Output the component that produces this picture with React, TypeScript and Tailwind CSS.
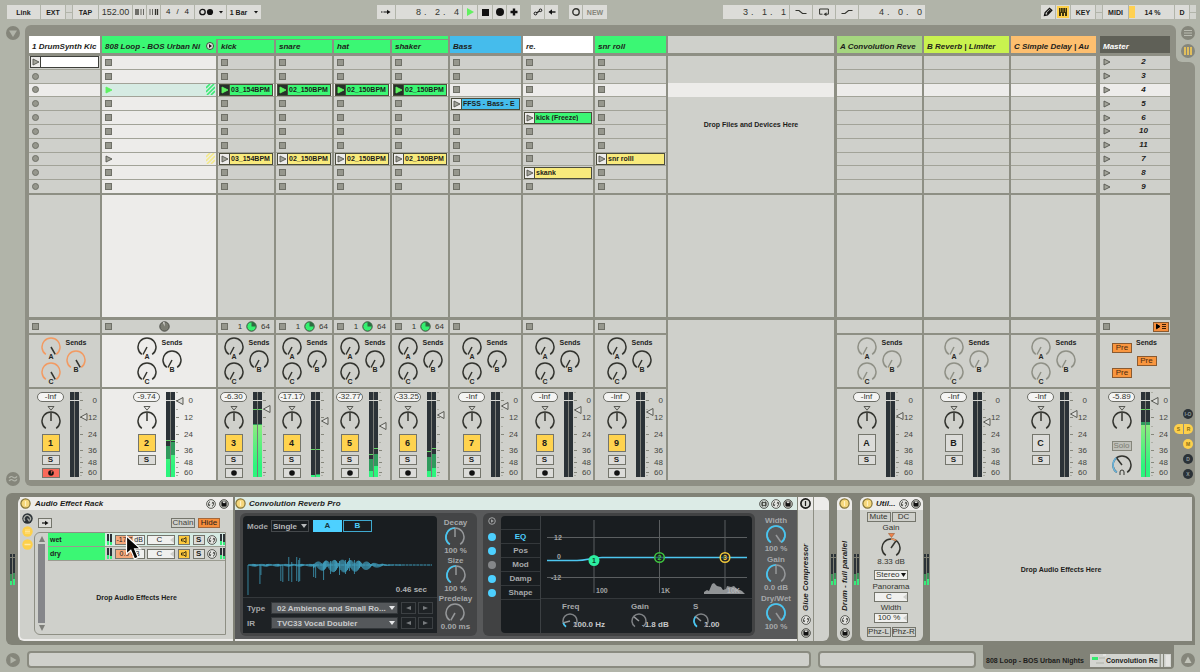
import type { ReactNode } from "react";

type Level = { peak: number; dim: number; bright: number };

interface IClip {
  row: number;
  name: string;
  color: string;
  playing?: boolean;
}

interface ITrack {
  id: string;
  name: string;
  header: string;
  width: string;
  pad: string;
  kind: "first" | "group" | "child" | "wide" | "return" | "master";
  volume: string;
  fader: number;
  levels?: [Level, Level];
  clips?: IClip[];
}

const GREEN = "bg-[#3bf774]";
const YELLOW = "bg-[#f8ea7c]";
const BLUE = "bg-[#45bcec]";
const ROWS = [0, 1, 2, 3, 4, 5, 6, 7, 8, 9];
const SCENES = ["2", "3", "4", "5", "6", "10", "11", "7", "8", "9"];

const firstTracks: ITrack[] = [
  { id: "1", name: "1 DrumSynth Kic", header: "bg-white", width: "w-[71px]", pad: "pl-2", kind: "first", volume: "-Inf", fader: 25 },
  {
    id: "2", name: "808 Loop - BOS Urban Ni", header: GREEN, width: "w-[114px]", pad: "pl-[31px]", kind: "group", volume: "-9.74", fader: 9,
    levels: [{ peak: 48, dim: 54, bright: 67 }, { peak: 48, dim: 50, bright: 63 }],
  },
];

const childTracks: ITrack[] = [
  {
    id: "3", name: "kick", header: GREEN, width: "w-14", pad: "pl-0.5", kind: "child", volume: "-6.30", fader: 17,
    levels: [{ peak: 17, dim: 32, bright: 33 }, { peak: 17, dim: 32, bright: 33 }],
    clips: [{ row: 2, name: "03_154BPM", color: GREEN, playing: true }, { row: 7, name: "03_154BPM", color: YELLOW }],
  },
  {
    id: "4", name: "snare", header: GREEN, width: "w-14", pad: "pl-0.5", kind: "child", volume: "-17.17", fader: 29,
    levels: [{ peak: 57, dim: 83, bright: 83 }, { peak: 57, dim: 82, bright: 83 }],
    clips: [{ row: 2, name: "02_150BPM", color: GREEN, playing: true }, { row: 7, name: "02_150BPM", color: YELLOW }],
  },
  {
    id: "5", name: "hat", header: GREEN, width: "w-14", pad: "pl-0.5", kind: "child", volume: "-32.77", fader: 34,
    levels: [{ peak: 62, dim: 67, bright: 79 }, { peak: 56, dim: 62, bright: 74 }],
    clips: [{ row: 2, name: "02_150BPM", color: GREEN, playing: true }, { row: 7, name: "02_150BPM", color: YELLOW }],
  },
  {
    id: "6", name: "shaker", header: GREEN, width: "w-14", pad: "pl-0.5", kind: "child", volume: "-33.25", fader: 23,
    levels: [{ peak: 59, dim: 65, bright: 79 }, { peak: 56, dim: 62, bright: 76 }],
    clips: [{ row: 2, name: "02_150BPM", color: GREEN, playing: true }, { row: 7, name: "02_150BPM", color: YELLOW }],
  },
];

const wideTracks: ITrack[] = [
  { id: "7", name: "Bass", header: BLUE, width: "w-[71px]", pad: "pl-2", kind: "wide", volume: "-Inf", fader: 14, clips: [{ row: 3, name: "FFSS - Bass - E", color: BLUE }] },
  { id: "8", name: "re.", header: "bg-white", width: "w-[70px]", pad: "pl-2", kind: "wide", volume: "-Inf", fader: 18, clips: [{ row: 4, name: "kick (Freeze)", color: GREEN }, { row: 8, name: "skank", color: YELLOW }] },
  { id: "9", name: "snr roll", header: GREEN, width: "w-[71px]", pad: "pl-2", kind: "wide", volume: "-Inf", fader: 20, clips: [{ row: 7, name: "snr rolll", color: YELLOW }] },
];

const returnTracks: ITrack[] = [
  { id: "A", name: "A Convolution Reve", header: "bg-[#a5d67f]", width: "w-[85px]", pad: "pl-4", kind: "return", volume: "-Inf", fader: 24 },
  { id: "B", name: "B Reverb | Limiter", header: "bg-[#c9f24f]", width: "w-[85px]", pad: "pl-4", kind: "return", volume: "-Inf", fader: 30 },
  { id: "C", name: "C Simple Delay | Au", header: "bg-[#fdbf6f]", width: "w-[85px]", pad: "pl-4", kind: "return", volume: "-Inf", fader: 22 },
];

const master: ITrack = {
  id: "M", name: "Master", header: "bg-[#5f6057] text-white", width: "w-[70px]", pad: "pl-2", kind: "master", volume: "-5.89", fader: 9,
  levels: [{ peak: 17, dim: 30, bright: 33 }, { peak: 17, dim: 30, bright: 33 }],
};

const point = (c: number, r: number, deg: number) => {
  const a = ((deg - 90) * Math.PI) / 180;
  return `${(c + r * Math.cos(a)).toFixed(2)} ${(c + r * Math.sin(a)).toFixed(2)}`;
};

const arc = (c: number, r: number, from: number, to: number) =>
  `M${point(c, r, from)} A${r} ${r} 0 ${to - from > 180 ? 1 : 0} 1 ${point(c, r, to)}`;

interface IKnob {
  label: string;
  angle: number;
  letter?: string;
  color?: string;
  pointer?: string;
  fill?: string;
  fillFrom?: number;
  small?: boolean;
}

const Knob = ({ label, angle, letter, color = "#33342f", pointer = "#33342f", fill, fillFrom = -145, small }: IKnob) => {
  const c = small ? 8 : 10;
  const r = small ? 7 : 9;
  return (
    <span className={`relative block shrink-0 ${small ? "h-4 w-4" : letter ? "h-[25px] w-5" : "h-5 w-5"}`}>
      <svg className="block h-full w-full" viewBox={`0 0 ${c * 2} ${letter ? 25 : c * 2}`} fill="none" strokeWidth="1.5">
        <path d={arc(c, r, -145, 145)} stroke={color} />
        {fill && <path d={arc(c, r, Math.min(fillFrom, angle), Math.max(fillFrom, angle))} stroke={fill} strokeWidth="1.7" />}
        <path d={`M${c} ${c} L${point(c, r - 0.5, angle)}`} stroke={pointer} />
        {letter && (
          <text x="10" y="21.5" textAnchor="middle" fontSize="7" fontWeight="700" fill="#262722">
            {letter}
          </text>
        )}
      </svg>
      <input type="range" aria-label={label} className="absolute inset-0 m-0 h-full w-full opacity-0" />
    </span>
  );
};

const Meter = ({ levels }: { levels?: [Level, Level] }) => (
  <svg className="h-[85px] w-[9px] shrink-0" viewBox="0 0 9 85">
    <defs>
      <linearGradient id="lvl" x1="0" y1="30" x2="0" y2="85" gradientUnits="userSpaceOnUse">
        <stop offset="0" stopColor="#93ea80" />
        <stop offset="0.8" stopColor="#2cf57d" />
      </linearGradient>
    </defs>
    <rect width="9" height="85" fill="#7b7d78" />
    {[0, 5].map((x, i) => {
      const l = levels?.[i];
      return (
        <g key={x}>
          <rect x={x} width="4" height="85" fill="#2b3237" />
          {l && <rect x={x} y={l.dim} width="4" height={85 - l.dim} fill="#2f9a5c" />}
          {l && <rect x={x} y={l.bright} width="4" height={85 - l.bright} fill="url(#lvl)" />}
          {l && <rect x={x} y={l.peak} width="4" height="1" fill="#62d564" />}
        </g>
      );
    })}
    <rect y="8" width="9" height="1" fill="#d9dad6" />
  </svg>
);

const Fader = ({ name, at }: { name: string; at: number }) => (
  <span className="relative block h-[85px] w-2.5 shrink-0">
    <svg className="block h-full w-full" viewBox="0 0 10 85" stroke="#85867b">
      {[8.5, 25.5, 42.5, 58.5, 70.5, 80.5].map((y) => (
        <path key={y} d={`M1 ${y}h3`} />
      ))}
      {[0.5, 17.5, 34.5, 50.5, 65.5, 75.5, 83.5].map((y) => (
        <path key={y} d={`M1 ${y}h2`} stroke="#acada4" />
      ))}
      <path d={`M1.5 ${at} L8 ${at - 3.5} V${at + 3.5} Z`} fill="#dededb" stroke="#4b4c46" strokeWidth="0.9" />
    </svg>
    <input type="range" aria-label={`${name} volume`} className="absolute inset-0 m-0 h-full w-full opacity-0" />
  </span>
);

const Stop = () => <span className="block h-[7px] w-[7px] border border-[#6f7067] bg-[#96978d]" />;

const Play = ({ fill = "#a3a49a", stroke = "#55564f" }) => (
  <svg className="h-2 w-2" viewBox="0 0 8 8">
    <path d="M1 1 L7 4 L1 7 Z" fill={fill} stroke={stroke} strokeWidth="0.9" />
  </svg>
);

const Clip = ({ clip }: { clip: IClip }) => (
  <button className={`mx-px flex h-3 min-w-0 flex-1 items-center overflow-hidden border border-[#4b4c3c] ${clip.color}`}>
    <span className={`flex h-full w-2.5 shrink-0 items-center justify-center border-r border-[#4b4c3c] ${clip.playing ? "bg-[#263029]" : "bg-[#edecea]"}`}>
      {clip.playing ? <Play fill="#5df261" stroke="#5df261" /> : <Play />}
    </span>
    <span className="overflow-hidden pl-px text-[7px] font-bold whitespace-nowrap">{clip.name}</span>
  </button>
);

const Stripes = ({ color }: { color: string }) => (
  <svg className="h-[11px] w-[9px]" viewBox="0 0 9 11" stroke={color} strokeWidth="1.6">
    <path d="M0 4 L4 0 M0 8 L8 0 M1 11 L9 3 M5 11 L9 7" />
  </svg>
);

const ClipCell = ({ track, row }: { track: ITrack; row: number }) => {
  const clip = track.clips?.find((c) => c.row === row);
  const lit = row === 2 || track.kind === "group";
  const tinted = track.kind === "group" && row === 2;
  const bg = tinted ? "bg-[#d6ebe3]" : lit ? "bg-[#edecea]" : "bg-[#cfd0cb]";
  if (clip) {
    return (
      <div className={`flex min-w-0 items-center ${bg}`}>
        <Clip clip={clip} />
      </div>
    );
  }
  return (
    <div className={`flex min-h-0 min-w-0 items-center pl-[3px] ${bg}`}>
      {track.kind === "first" && row > 0 && <span className="block h-[7px] w-[7px] rounded-full border border-[#6f7067] bg-[#96978d]" />}
      {track.kind === "first" && row === 0 && (
        <button aria-label="Launch clip" className="-ml-0.5 mr-px flex h-3 flex-1 border border-[#3f403b] bg-white">
          <span className="flex h-full w-2.5 items-center justify-center border-r border-[#3f403b] bg-[#edecea]">
            <Play />
          </span>
        </button>
      )}
      {track.kind === "group" && (row === 2 || row === 7) && (
        <>
          {tinted ? <Play fill="#5df261" stroke="#5df261" /> : <Play />}
          <span className="mr-px ml-auto">
            <Stripes color={tinted ? "#3bea74" : "#f4ea8a"} />
          </span>
        </>
      )}
      {((track.kind === "group" && row !== 2 && row !== 7) || track.kind === "child" || track.kind === "wide") && <Stop />}
      {track.kind === "master" && (
        <>
          <Play />
          <span className="flex-1 pl-1.5 text-center text-[8px] font-bold italic">{SCENES[row]}</span>
        </>
      )}
    </div>
  );
};

const Status = ({ track }: { track: ITrack }) => (
  <>
    {track.kind !== "return" && <Stop />}
    {track.kind === "group" && (
      <svg className="ml-[47px] h-[11px] w-[11px]" viewBox="0 0 11 11">
        <circle cx="5.5" cy="5.5" r="4.7" fill="#7b7c72" stroke="#4b4c46" />
        <path d="M5.5 5.5 V1 A4.5 4.5 0 0 0 4 1.3 Z" fill="#edecea" />
      </svg>
    )}
    {track.kind === "child" && (
      <span className="ml-auto flex items-center gap-1 pr-1 text-[8px] text-[#33342f]">
        1
        <svg className="h-[11px] w-[11px]" viewBox="0 0 11 11">
          <circle cx="5.5" cy="5.5" r="4.7" fill="#35f06f" stroke="#3d4a3a" />
          <path d="M5.5 5.5 V1 A4.5 4.5 0 0 1 10 5.5 Z" fill="#2e6b42" />
        </svg>
        64
      </span>
    )}
    {track.kind === "master" && (
      <button aria-label="Back to arrangement" className="mr-px ml-auto flex h-2.5 w-4 items-center justify-center border border-[#8a5a30] bg-[#f68e3c]">
        <svg className="h-[7px] w-3" viewBox="0 0 12 7" stroke="#3a1d06">
          <path d="M1.5 1.2 L5 3.5 L1.5 5.8 Z" fill="#000" stroke="#000" />
          <path d="M7 1.5h4 M7 3.5h4 M7 5.5h4" />
        </svg>
      </button>
    )}
  </>
);

const PreButton = () => <button className="h-2.5 w-5 border border-[#8a5a30] bg-[#f9963f] text-[8px] leading-[8px] font-normal text-[#4c2a0e]">Pre</button>;

const Sends = ({ track }: { track: ITrack }) => {
  if (track.kind === "master") {
    return (
      <div className="flex gap-1 pl-1">
        <div className="flex w-5 flex-col gap-[15px] pt-2">
          <PreButton />
          <PreButton />
        </div>
        <div className="flex flex-col items-center gap-2.5 pt-1">
          <span className="text-[7px] leading-[7px] font-bold">Sends</span>
          <PreButton />
        </div>
      </div>
    );
  }
  const first = track.kind === "first";
  const props = {
    angle: first ? 150 : -152,
    color: first ? "#f29a62" : track.kind === "return" ? "#8f9086" : "#33342f",
    pointer: track.kind === "return" ? "#8f9086" : "#33342f",
  };
  return (
    <div className="flex">
      <div className="flex w-[27px] flex-col items-center pt-0.5">
        <Knob label={`${track.name} send A`} letter="A" {...props} />
        <Knob label={`${track.name} send C`} letter="C" {...props} />
      </div>
      <div className="flex w-6 flex-col items-center gap-1 pt-1">
        <span className="text-[7px] leading-[7px] font-bold">Sends</span>
        <Knob label={`${track.name} send B`} letter="B" {...props} />
      </div>
    </div>
  );
};

const SCALE = [
  { value: "0", height: "h-[17px]" },
  { value: "12", height: "h-[17px]" },
  { value: "24", height: "h-[17px]" },
  { value: "36", height: "h-[15px]" },
  { value: "48", height: "h-[9px]" },
  { value: "60", height: "h-[11px]" },
];

const Mixer = ({ track }: { track: ITrack }) => {
  const isReturn = track.kind === "return";
  const number = isReturn ? "bg-[#dcdcd9]" : "bg-[#ffd34f]";
  const armed = track.kind === "first";
  return (
    <div className="flex gap-1.5 pt-[3px]">
      <div className="flex w-[27px] flex-col items-center">
        <span className="flex h-2.5 w-full items-center justify-center rounded-full border border-[#6c6d66] bg-[#f4f4f3] text-[8px] text-[#33342f]">{track.volume}</span>
        <svg className="mt-1 h-[5px] w-2" viewBox="0 0 8 5" fill="none" stroke="#4b4c46" strokeWidth="0.9">
          <path d="M1 0.5 H7 L4 4.2 Z" />
        </svg>
        <Knob label={`${track.name} pan`} angle={0} />
        {track.kind === "master" ? (
          <>
            <button className="mt-2.5 mb-1 h-2.5 w-5 border border-[#85867b] bg-[#bfc0b9] text-[8px] leading-[8px] text-[#7b7c72]">Solo</button>
            <span className="relative">
              <Knob label="Cue volume" angle={-38} fill="#69b4dc" />
              <svg className="absolute bottom-0 left-[7px] h-1.5 w-1.5" viewBox="0 0 6 6" fill="none" stroke="#33342f">
                <path d="M1 6 V3 A2 2 0 0 1 5 3 V6" />
              </svg>
            </span>
          </>
        ) : (
          <>
            <button className={`mt-[3px] flex h-[18px] w-[18px] shrink-0 items-center justify-center border border-[#74756c] text-[9px] font-bold ${number}`}>{track.id}</button>
            <button aria-label="Solo" className="mt-[3px] flex h-2.5 w-[18px] shrink-0 items-center justify-center border border-[#74756c] bg-[#dcdcd9] text-[8px] font-bold">
              S
            </button>
            {!isReturn && track.kind !== "group" && (
              <button aria-label="Arm" className={`mt-[3px] flex h-2.5 w-[18px] shrink-0 items-center justify-center border border-[#74756c] ${armed ? "bg-[#f9695a]" : "bg-[#dcdcd9]"}`}>
                <svg className="h-1.5 w-1.5" viewBox="0 0 6 6">
                  <circle cx="3" cy="3" r="2.8" fill="#111" />
                  {armed && <path d="M3.4 3.6 V1 L4.6 1.6" stroke="#f9695a" strokeWidth="0.8" fill="none" />}
                </svg>
              </button>
            )}
          </>
        )}
      </div>
      <div className="flex">
        <Meter levels={track.levels} />
        <Fader name={track.name} at={track.fader} />
        {track.kind !== "child" && (
          <div className="flex w-2 flex-col items-end text-[8px] text-[#45463f]">
            {SCALE.map((s) => (
              <span key={s.value} className={`flex items-center ${s.height}`}>
                {s.value}
              </span>
            ))}
          </div>
        )}
      </div>
    </div>
  );
};

const Track = ({ track }: { track: ITrack }) => {
  const bg = track.kind === "group" ? "bg-[#edecea]" : "bg-[#cfd0cb]";
  const child = track.kind === "child";
  return (
    <section className={`flex shrink-0 flex-col ${track.width}`}>
      <h2 className={`flex shrink-0 items-end justify-between overflow-hidden pb-0.5 pl-[3px] text-[8px] leading-[9px] font-bold whitespace-nowrap italic ${child ? "h-[13px]" : "h-[17px]"} ${track.header}`}>
        {track.name}
        {track.kind === "group" && (
          <svg className="mr-0.5 h-2.5 w-2" viewBox="0 0 8 10">
            <circle cx="4" cy="5" r="3.5" fill="#dfe6dc" stroke="#33342f" strokeWidth="0.9" />
            <path d="M3 3 L6 5 L3 7 Z" fill="#111" />
          </svg>
        )}
      </h2>
      <div className="mt-[3px] grid h-[137px] grid-cols-1 grid-rows-10 gap-px bg-[#a2a398]">
        {ROWS.map((row) => (
          <ClipCell key={row} track={track} row={row} />
        ))}
      </div>
      <div className={`mt-0.5 flex-1 ${bg}`} />
      <div className="mt-[3px] flex h-[13px] items-center bg-[#cfd0cb] pl-[3px]">
        <Status track={track} />
      </div>
      <div className={`mt-0.5 h-[52px] ${bg} ${track.pad}`}>
        <Sends track={track} />
      </div>
      <div className={`mt-0.5 h-[91px] ${bg} ${track.pad}`}>
        <Mixer track={track} />
      </div>
    </section>
  );
};

const DropArea = () => (
  <section className="flex min-w-0 flex-1 flex-col">
    <div className="h-[17px] bg-[#cfd0cb]" />
    <div className="mt-[3px] grid h-[137px] grid-cols-1 grid-rows-10 bg-[#cfd0cb]">
      <div className="col-start-1 row-start-3 bg-[#edecea]" />
      <p className="col-start-1 row-span-full self-center text-center text-[7px] font-bold">Drop Files and Devices Here</p>
    </div>
    <div className="mt-0.5 flex-1 bg-[#cfd0cb]" />
    <div className="mt-[3px] h-[160px] bg-[#cfd0cb]" />
  </section>
);

const Cell = ({ className, children, label }: { className: string; children?: ReactNode; label?: string }) => (
  <button aria-label={label} className={`flex h-3.5 shrink-0 items-center justify-center bg-[#dcdcd8] text-[7px] font-bold ${className}`}>
    {children}
  </button>
);

const Split = () => (
  <span className="flex w-1.5 flex-col gap-px">
    <span className="h-[7px] bg-[#d3d4cf]" />
    <span className="h-1.5 bg-[#d3d4cf]" />
  </span>
);

const Position = ({ parts }: { parts: string[] }) => (
  <span className="flex h-3.5 w-[66px] items-center justify-end bg-[#dcdcd8] pr-[3px] text-[9px] text-[#33342f]">
    {parts.map((p, i) => (
      <span key={i} className={`flex gap-[3px] ${i < 2 ? "w-[19px]" : ""}`}>
        <span>{p}</span>
        {i < 2 && <span>.</span>}
      </span>
    ))}
  </span>
);

const Toolbar = () => (
  <header className="flex h-[25px] shrink-0 items-start justify-between pt-[5px] pr-1 pl-[7px]">
    <div className="flex gap-px">
      <Cell className="w-[33px]">Link</Cell>
      <Cell className="w-6">EXT</Cell>
      <Split />
      <Cell className="w-[25px]">TAP</Cell>
      <span className="flex h-3.5 w-[33px] items-center justify-center bg-[#dcdcd8] text-[9px] text-[#33342f]">152.00</span>
      <Cell className="w-[13px]" label="Nudge down">
        <svg className="h-1.5 w-2.5" viewBox="0 0 10 6" stroke="#33342f">
          <path d="M1 0v6M3 0v6" strokeWidth="1.3" />
          <path d="M6 0v6M8.5 0v6" strokeWidth="0.7" />
        </svg>
      </Cell>
      <Cell className="w-[13px]" label="Nudge up">
        <svg className="h-1.5 w-2.5" viewBox="0 0 10 6" stroke="#33342f">
          <path d="M1 0v6M3.5 0v6" strokeWidth="0.7" />
          <path d="M6.5 0v6M8.5 0v6" strokeWidth="1.3" />
        </svg>
      </Cell>
      <span className="flex h-3.5 w-[33px] items-center justify-center gap-1.5 bg-[#dcdcd8] text-[8px]">
        <span>4</span>
        <span>/</span>
        <span>4</span>
      </span>
      <Cell className="w-[31px]" label="Metronome">
        <svg className="h-2 w-7" viewBox="0 0 28 8">
          <circle cx="5.5" cy="4" r="2.7" fill="none" stroke="#111" strokeWidth="1.3" />
          <circle cx="13" cy="4" r="3.1" fill="#111" />
          <path d="M22 3h4l-2 2.5z" fill="#111" />
        </svg>
      </Cell>
      <Cell className="w-[34px] gap-[7px]">
        1 Bar
        <svg className="h-1 w-1" viewBox="0 0 4 4">
          <path d="M0 1h4l-2 2.5z" fill="#111" />
        </svg>
      </Cell>
    </div>
    <div className="flex gap-[11px]">
      <div className="flex gap-px">
        <Cell className="w-[18px]" label="Follow">
          <svg className="h-1.5 w-2.5" viewBox="0 0 10 6" stroke="#111" strokeWidth="1.2">
            <path d="M0 3h1.5M2.5 3h4" />
            <path d="M6 0.8 L9.5 3 L6 5.2Z" fill="#111" stroke="none" />
          </svg>
        </Cell>
        <Position parts={["8", "2", "4"]} />
        <Cell className="w-3.5" label="Play">
          <svg className="h-2 w-2" viewBox="0 0 8 8">
            <path d="M1 0 L8 4 L1 8Z" fill="#62f060" />
          </svg>
        </Cell>
        <Cell className="w-3.5" label="Stop">
          <span className="block h-[7px] w-[7px] bg-[#111]" />
        </Cell>
        <Cell className="w-[13px]" label="Record">
          <span className="block h-2 w-2 rounded-full bg-[#111]" />
        </Cell>
        <Cell className="w-[13px]" label="Overdub">
          <svg className="h-2 w-2" viewBox="0 0 8 8" stroke="#111" strokeWidth="2.4">
            <path d="M4 0.5v7M0.5 4h7" />
          </svg>
        </Cell>
      </div>
      <div className="flex gap-px">
        <Cell className="w-[13px]" label="Automation arm">
          <svg className="h-2 w-2.5" viewBox="0 0 10 8" fill="none" stroke="#111">
            <circle cx="2.5" cy="5.5" r="1.4" />
            <circle cx="7.5" cy="2.3" r="1.3" />
            <path d="M3.5 4.8 L6.5 3.2" strokeWidth="1.3" />
          </svg>
        </Cell>
        <Cell className="w-[13px]" label="Back">
          <svg className="h-1.5 w-2" viewBox="0 0 8 6" stroke="#111" strokeWidth="1.4">
            <path d="M3 3h4.5" />
            <path d="M4 0.2 L0.5 3 L4 5.8Z" fill="#111" stroke="none" />
          </svg>
        </Cell>
      </div>
      <div className="flex gap-px">
        <Cell className="w-[13px]" label="Session record">
          <svg className="h-2 w-2" viewBox="0 0 8 8" fill="none" stroke="#33342f" strokeWidth="1.4">
            <circle cx="4" cy="4" r="3.2" />
          </svg>
        </Cell>
        <Cell className="w-6 text-[#85867b]">NEW</Cell>
      </div>
    </div>
    <div className="flex gap-px">
      <Position parts={["3", "1", "1"]} />
      <Cell className="w-[22px]" label="Punch in">
        <svg className="h-1.5 w-3" viewBox="0 0 12 6" fill="none" stroke="#33342f" strokeWidth="1.2">
          <path d="M0.5 1.5h3.5l3.5 3h4" />
        </svg>
      </Cell>
      <Cell className="w-[22px]" label="Loop">
        <svg className="h-2 w-2.5" viewBox="0 0 10 8" fill="none" stroke="#33342f">
          <path d="M3.5 6.2H0.6V1h8.8v5.2H7" />
          <path d="M4.5 6.2 L7.5 4.2V8.200Z" fill="#33342f" stroke="none" />
        </svg>
      </Cell>
      <Cell className="w-[22px]" label="Punch out">
        <svg className="h-1.5 w-3" viewBox="0 0 12 6" fill="none" stroke="#33342f" strokeWidth="1.2">
          <path d="M0.5 4.5h3.5l3.5-3h4" />
        </svg>
      </Cell>
      <Position parts={["4", "0", "0"]} />
    </div>
    <div className="flex gap-px">
      <Cell className="w-3.5" label="Draw">
        <svg className="h-2.5 w-2.5" viewBox="0 0 10 10" fill="none" stroke="#111" strokeWidth="1.3">
          <path d="M1.5 8.5 L2.2 5.5 L6.5 1.3 L8.8 3.4 L4.5 7.8Z M4 6.5 L7.2 3.2" />
        </svg>
      </Cell>
      <Cell className="w-3.5" label="Computer keyboard">
        <svg className="h-3 w-3" viewBox="0 0 12 12">
          <rect width="12" height="12" fill="#fdd04b" />
          <rect x="2" y="2" width="8" height="8" fill="#3b330f" />
          <path d="M4.5 7v3M7.5 7v3" stroke="#fdd04b" />
          <path d="M3.5 2v4M6 2v4M8.5 2v4" stroke="#fdd04b" strokeWidth="0.5" />
        </svg>
      </Cell>
      <Cell className="w-6">KEY</Cell>
      <Split />
      <Cell className="w-[25px]">MIDI</Cell>
      <span className="flex h-3.5 w-[45px] items-center bg-[#dcdcd8] text-[7px] font-bold">
        <span className="h-3 w-1.5 bg-[#ffd152]" />
        <span className="flex-1 pr-1 text-center">14 %</span>
      </span>
      <Cell className="w-3.5">D</Cell>
      <Split />
    </div>
  </header>
);

const Round = ({ children, label }: { children: ReactNode; label: string }) => (
  <button aria-label={label} className="flex h-3.5 w-3.5 shrink-0 items-center justify-center rounded-full bg-[#85867b]">
    {children}
  </button>
);

const Toggle = ({ text, on }: { text: string; on?: boolean }) => (
  <button className={`h-2.5 w-2.5 rounded-full ${on ? "bg-[#fdd04b] text-[#8a6d12]" : "bg-[#2b3237] text-[#8e9a9c]"}`}>{text}</button>
);

const Session = () => (
  <main className="flex min-h-0 flex-1 pr-[5px]">
    <div className="flex w-[25px] flex-col items-center justify-between pt-px">
      <Round label="Browser">
        <svg className="h-2.5 w-2.5" viewBox="0 0 10 10">
          <path d="M1 2.5h8L5 9z" fill="#b1b4a9" />
        </svg>
      </Round>
      <Round label="Groove pool">
        <svg className="h-2.5 w-2.5" viewBox="0 0 10 10" fill="none" stroke="#b1b4a9" strokeWidth="1.2">
          <path d="M1 4q2-2.5 4-0.8t4-0.8M1 7q2-2.5 4-0.8t4-0.8" />
        </svg>
      </Round>
    </div>
    <div className="flex min-w-0 flex-1 gap-0.5 rounded-l-md rounded-tr-md bg-[#8e8f84] pt-[11px] pr-1.5 pb-1.5 pl-1">
      {firstTracks.map((t) => (
        <Track key={t.id} track={t} />
      ))}
      <div className="flex shrink-0 flex-col">
        <div className="-ml-0.5 h-[3px] bg-[#3bf774]" />
        <div className="mt-px flex flex-1 gap-0.5">
          {childTracks.map((t) => (
            <Track key={t.id} track={t} />
          ))}
        </div>
      </div>
      {wideTracks.map((t) => (
        <Track key={t.id} track={t} />
      ))}
      <DropArea />
      <div className="ml-px flex gap-0.5">
        {returnTracks.map((t) => (
          <Track key={t.id} track={t} />
        ))}
      </div>
      <div className="ml-0.5 flex">
        <Track track={master} />
      </div>
    </div>
    <div className="flex w-[19px] shrink-0 flex-col bg-[#8e8f84]">
      <div className="flex h-[37px] flex-col items-end gap-1 rounded-bl-md bg-[#b1b4a9] pt-px">
        <Round label="Arrangement">
          <svg className="h-2 w-2" viewBox="0 0 8 8" stroke="#b9bbb1">
            <path d="M0 1.5h8M0 4h8M0 6.5h8" />
          </svg>
        </Round>
        <Round label="Session">
          <svg className="h-2 w-2" viewBox="0 0 8 8" stroke="#ffd152" strokeWidth="1.5">
            <path d="M1 0v8M4 0v8M7 0v8" />
          </svg>
        </Round>
      </div>
      <div className="flex flex-1 flex-col bg-[#b1b4a9]">
        <div className="flex flex-1 flex-col items-end justify-end gap-[5px] rounded-tr-md rounded-br-md bg-[#8e8f84] pr-0.5 pb-[7px] text-[5px] font-bold">
          <Toggle text="I-O" />
          <div className="flex gap-px">
            <button className="h-2.5 w-[9px] rounded-l-full bg-[#fdd04b] text-[#8a6d12]">S</button>
            <button className="h-2.5 w-[9px] rounded-r-full bg-[#fdd04b] text-[#8a6d12]">R</button>
          </div>
          <Toggle text="M" on />
          <Toggle text="D" />
          <Toggle text="X" />
        </div>
      </div>
    </div>
  </main>
);

const Power = ({ on }: { on?: boolean }) => (
  <svg className="h-[11px] w-[11px] shrink-0" viewBox="0 0 11 11">
    <circle cx="5.5" cy="5.5" r="4.6" fill={on ? "#f6d77c" : "#dcdcd8"} stroke={on ? "#857436" : "#1d1d1b"} strokeWidth={on ? 1.2 : 1.7} />
    <path d="M5.5 3v5" stroke={on ? "#fff1c4" : "#1d1d1b"} strokeWidth="1.2" />
  </svg>
);

const Swap = () => (
  <svg className="h-2.5 w-2.5 shrink-0" viewBox="0 0 10 10" fill="none" stroke="#3c3d38">
    <circle cx="5" cy="5" r="4.4" fill="#e4e4e1" strokeWidth="0.8" />
    <path d="M3 6.5 A2.5 2.5 0 0 1 4 2.7 M7 3.5 A2.5 2.5 0 0 1 6 7.3" />
    <path d="M1.8 5.4h2.6L3 7.4zM8.2 4.6H5.6L7 2.6z" fill="#3c3d38" stroke="none" />
  </svg>
);

const Save = () => (
  <svg className="h-2.5 w-2.5 shrink-0" viewBox="0 0 10 10">
    <circle cx="5" cy="5" r="4.4" fill="#b6b7b0" stroke="#3c3d38" strokeWidth="0.8" />
    <path d="M2.5 2.5h5v5h-4.3l-0.7-0.7z" fill="#111" />
    <path d="M3.8 2.5h2.6v1.6H3.8z" fill="#d8d8d4" />
  </svg>
);

const HotSwap = () => (
  <svg className="h-2.5 w-2.5 shrink-0" viewBox="0 0 10 10" fill="none" stroke="#3c3d38">
    <circle cx="5" cy="5" r="4.4" fill="#c5cdc8" strokeWidth="0.8" />
    <path d="M2.8 3.5h4.4v3H2.800zM3.5 2.5v5M6.5 2.5v5" strokeWidth="0.8" />
  </svg>
);

const MiniMeter = () => (
  <svg className="h-[31px] w-[5px]" viewBox="0 0 5 31">
    <path d="M0 0h2v3H0zM3 0h2v3H3zM0 4h2v16H0zM3 4h2v16H3z" fill="#2b3237" />
    <path d="M0 20h2v7H0zM3 19h2v7H3z" fill="#3c8f58" />
    <path d="M0 27h2v4H0zM3 25h2v6H3z" fill="#36ee7c" />
  </svg>
);

const TinyMeter = () => (
  <svg className="h-[11px] w-[5px] shrink-0" viewBox="0 0 5 11">
    <path d="M0 0h2v11H0zM3 0h2v11H3z" fill="#2b3237" />
    <path d="M0 7h2v4H0zM3 8h2v3H3z" fill="#36ee7c" />
  </svg>
);

const Chain = ({ name, value, selected }: { name: string; value: string; selected?: boolean }) => (
  <div className={`flex h-3.5 items-center border-b border-[#9a9b90] text-[8px] ${selected ? "bg-[#d6ebe3]" : "bg-[#cfd0cb]"}`}>
    <span className="flex h-full w-[57px] shrink-0 items-center bg-[#3bf774] pl-0.5 text-[7px] font-bold">{name}</span>
    <span className="flex flex-1 items-center justify-between pl-0.5">
      <TinyMeter />
      <span className="flex h-2.5 w-[30px] items-center justify-center border border-[#74756c] bg-[linear-gradient(90deg,#f5a87c_60%,#f0f0ee_60%)] text-[7px] whitespace-nowrap">{value}</span>
      <span className="relative flex h-2.5 w-7 items-center justify-center border border-[#74756c] bg-[#f0f0ee] pr-1">
        C
        <svg className="absolute right-0 h-1.5 w-1" viewBox="0 0 4 6">
          <path d="M4 0v6L0 3z" fill="#cfcfcb" />
        </svg>
      </span>
      <button aria-label={`${name} on`} className="flex h-2.5 w-3 items-center justify-center border border-[#74756c] bg-[#fdc93f]">
        <svg className="h-1.5 w-1.5" viewBox="0 0 6 6" fill="none" stroke="#2b2410" strokeWidth="0.9">
          <path d="M0.5 2h2.3L5 0.5v5L2.8 4H0.5z" />
        </svg>
      </button>
      <button aria-label={`${name} solo`} className="flex h-2.5 w-3 items-center justify-center border border-[#74756c] bg-[#dcdcd8] font-bold">
        S
      </button>
      <Swap />
      <TinyMeter />
    </span>
  </div>
);

const Rack = () => (
  <article className="relative flex w-[215px] shrink-0 flex-col rounded-l-md border-b-2 border-l-2 border-[#edecea] bg-[#cfd0cb]">
    <h3 className="flex h-[13px] items-center bg-[#edecea] text-[8px] font-bold italic">
      <Power on />
      <span className="flex-1 pl-1">Audio Effect Rack</span>
      <span className="flex gap-[3px] pr-1">
        <Swap />
        <Save />
      </span>
    </h3>
    <div className="flex flex-1 pt-0.5">
      <div className="flex w-3.5 flex-col items-center gap-0.5 pt-px">
        <svg className="h-[11px] w-[11px]" viewBox="0 0 11 11" fill="none" stroke="#aeb0a8" strokeWidth="1.3">
          <circle cx="5.5" cy="5.5" r="5.2" fill="#2b3237" stroke="none" />
          <path d="M3 8 A3.2 3.2 0 1 1 8 7.5 M5.5 5.5 L7.5 8.5" />
        </svg>
        <svg className="h-[11px] w-[11px]" viewBox="0 0 11 11" fill="none" stroke="#ffe9a6">
          <circle cx="5.5" cy="5.5" r="5.2" fill="#fdd04b" stroke="none" />
          <path d="M3 4h5M3 5.500h5M3 7h5" strokeWidth="0.8" />
        </svg>
        <svg className="h-[11px] w-[11px]" viewBox="0 0 11 11" stroke="#ffe9a6">
          <circle cx="5.5" cy="5.5" r="5.2" fill="#fdd04b" stroke="none" />
          <path d="M2.5 5.500h6" strokeWidth="1.5" />
        </svg>
      </div>
      <div className="flex flex-1 flex-col pt-1.5 pr-[7px] pb-1">
        <div className="flex h-2.5 items-center gap-[3px] pr-1.5 pl-1 text-[8px]">
          <button aria-label="Show chains" className="mr-auto flex h-2.5 w-3.5 items-center justify-center border border-[#74756c] bg-[#dcdcd8]">
            <svg className="h-1.5 w-2" viewBox="0 0 8 6" stroke="#111" strokeWidth="1.2">
              <path d="M1 3h4" />
              <path d="M4 0.8L7.5 3L4 5.2z" fill="#111" stroke="none" />
            </svg>
          </button>
          <button className="h-2.5 w-6 border border-[#74756c] leading-[8px] text-[#44453f]">Chain</button>
          <button className="h-2.5 w-[22px] border border-[#a5683a] bg-[#f68e3c] leading-[8px]">Hide</button>
        </div>
        <div className="mt-1 flex flex-1 rounded-l-md border border-[#8e8f84]">
          <div className="flex w-[13px] flex-col items-center justify-between py-[3px]">
            <svg className="h-1.5 w-1.5" viewBox="0 0 6 6">
              <path d="M3 0L6 6H0z" fill="#7d7e79" />
            </svg>
            <span className="my-0.5 w-[7px] flex-1 bg-[#85868a]" />
            <svg className="h-1.5 w-1.5" viewBox="0 0 6 6">
              <path d="M3 6L6 0H0z" fill="#7d7e79" />
            </svg>
          </div>
          <div className="flex flex-1 flex-col">
            <Chain name="wet" value="-17.7 dB" selected />
            <Chain name="dry" value="0.0 dB" />
            <p className="flex flex-1 items-center justify-center text-[7px] font-bold">Drop Audio Effects Here</p>
          </div>
        </div>
      </div>
    </div>
    <svg className="absolute top-[38px] left-[105px] h-[26px] w-[18px]" viewBox="0 0 18 26">
      <path d="M1.5 1 V19 L5.8 15.2 L9.5 24 L13.2 22.4 L9.6 13.9 H15.5 Z" fill="#050505" stroke="#fff" strokeWidth="1.2" />
    </svg>
  </article>
);

const Param = ({ label, value, angle, fill }: { label: string; value: string; angle: number; fill?: string }) => (
  <div className="flex h-[38px] flex-col items-center whitespace-nowrap">
    <span className="h-[9px]">{label}</span>
    <Knob label={label} angle={angle} color="#96989a" pointer="#96989a" fill={fill} />
    <span className="-mt-px h-[9px]">{value}</span>
  </div>
);

const SmallParam = ({ label, value, angle, fill, width }: { label: string; value: string; angle: number; fill?: boolean; width: string }) => (
  <div className={`flex flex-col ${width}`}>
    <span className="h-[9px]">{label}</span>
    <span className="flex items-end pt-0.5">
      <Knob label={label} angle={angle} color="#7e8184" pointer="#96989a" small fill={fill ? "#43c6f3" : undefined} />
      <span className="-ml-[5px] text-[#c6c8ca]">{value}</span>
    </span>
  </div>
);

const SPIKES = [
  [1, 0, 30], [13, 0, 19], [14, 0, 10], [34, 0, 16], [36, 0, 17], [42, 8, 16], [45, 3, 17], [50, 8, 16], [52, 5, 17], [53, 7, 16],
  [67, 0, 12], [69, 0, 13], [77, 2, 15], [84, 4, 9], [93, 4, 10], [99, 5, 9], [103, 7, 6], [108, 5, 9],
];

// impulse response tail, loudest between 66 and 125
const noise = Array.from({ length: 140 }, (_, i) => {
  const x = 2 + i * 1.1;
  const body = x < 66 ? 1.2 : x < 125 ? 3 + 2.6 * Math.sin(((x - 66) / 59) * Math.PI) : Math.max(0.4, 2.6 - (x - 125) / 9);
  const up = body * (0.25 + Math.abs(Math.sin(i * 12.9898)) * 0.7);
  const down = body * (0.25 + Math.abs(Math.sin(i * 78.233)) * 1.1);
  return `M${x.toFixed(1)} ${(32 - up).toFixed(1)}V${(32 + down).toFixed(1)}`;
}).join("");

const Waveform = () => (
  <svg className="h-16 w-full" viewBox="0 0 187 64" preserveAspectRatio="none" stroke="#3f9dbb" fill="none">
    <path d="M1 32H186" strokeDasharray="3 0.6" strokeWidth="1" />
    <path d={noise} strokeWidth="1" />
    <path d={SPIKES.map(([x, up, down]) => `M${x} ${32 - up}V${32 + down}`).join("")} strokeWidth="0.8" />
  </svg>
);

const IrRow = ({ label, value }: { label: string; value: string }) => (
  <div className="flex h-3 items-center">
    <label htmlFor={label} className="w-6">
      {label}
    </label>
    <span className="relative h-3 w-[127px]">
      <select id={label} className="h-3 w-full appearance-none border border-[#33373a] bg-[#55585b] pl-[5px] font-bold text-[#c9cbcc]">
        <option>{value}</option>
      </select>
      <svg className="absolute top-1 right-[3px] h-1 w-1.5" viewBox="0 0 6 4">
        <path d="M0 0h6L3 4z" fill="#e8e9ea" />
      </svg>
    </span>
    <button aria-label={`Previous ${label}`} className="ml-[3px] flex h-3 w-[15px] items-center justify-center border border-[#3c4043]">
      <svg className="h-1 w-[5px]" viewBox="0 0 5 4">
        <path d="M5 0v4L0 2z" fill="#777b7e" />
      </svg>
    </button>
    <button aria-label={`Next ${label}`} className="ml-0.5 flex h-3 w-[15px] items-center justify-center border border-[#3c4043]">
      <svg className="h-1 w-[5px]" viewBox="0 0 5 4">
        <path d="M0 0v4l5-2z" fill="#777b7e" />
      </svg>
    </button>
  </div>
);

const EqGraph = () => (
  <svg className="h-[82px] w-full" viewBox="0 0 209 82" fill="none" fontSize="7" fontWeight="700">
    <path d="M5 21.5h200M5 61.5h200M52 4v73M117.5 4v73M183 4v73" stroke="#5b5e60" />
    <g fill="#a2a4a5">
      <text x="12" y="24">12</text>
      <text x="15" y="42.5">0</text>
      <text x="9" y="64">-12</text>
      <text x="54" y="77">100</text>
      <text x="119" y="77">1K</text>
    </g>
    <path d="M162 78v-2l3-2 2 1 3-7 2-1 3 3 4 1 2 3 3-1 1-3 4 1 3-1 3 3 3 1 2 1 3 3z" fill="#919496" />
    <text x="185" y="77" fill="#b4b6b8">
      10K
    </text>
    <path d="M5 44.5 H35 C45 44.5 50 41.5 60 41.5 H205" stroke="#4dc6ef" strokeWidth="1.6" />
    <circle cx="52" cy="44.5" r="5.5" fill="#2ceea0" />
    <circle cx="117.5" cy="41.500" r="4.8" fill="#191d20" fillOpacity="0.6" stroke="#3ec53f" strokeWidth="1.5" />
    <circle cx="183" cy="41.500" r="4.8" fill="#191d20" fillOpacity="0.6" stroke="#f1c93a" strokeWidth="1.5" />
    <g textAnchor="middle">
      <text x="52" y="47" fill="#0b3d2a">1</text>
      <text x="117.5" y="44" fill="#3ec53f">2</text>
      <text x="183" y="44" fill="#f1c93a">3</text>
    </g>
  </svg>
);

const TABS = [
  { name: "EQ", on: true },
  { name: "Pos", on: true },
  { name: "Mod", on: false },
  { name: "Damp", on: true },
  { name: "Shape", on: true },
];

const Convolution = () => (
  <article className="ml-0.5 flex w-[562px] shrink-0 flex-col border-b-2 border-[#edecea] bg-[#58595a]">
    <h3 className="flex h-[13px] items-center bg-[#dcebe6] pr-1 text-[8px] font-bold italic">
      <Power on />
      <span className="flex-1 pl-[3px]">Convolution Reverb Pro</span>
      <span className="flex gap-0.5">
        <HotSwap />
        <Swap />
        <Save />
      </span>
    </h3>
    <div className="flex flex-1 pt-[3px] pb-[3px] pl-[5px] text-[8px] leading-[9px] font-bold text-[#a6a8aa]">
      <div className="flex w-[237px] rounded-md bg-[#444546] p-[3px]">
        <div className="flex w-[194px] flex-col rounded-sm bg-[#191d20]">
          <div className="flex items-center pt-1 pl-1">
            <label htmlFor="mode" className="w-6">
              Mode
            </label>
            <span className="relative h-3 w-[38px]">
              <select id="mode" className="h-3 w-full appearance-none border border-[#45494c] pl-px font-bold text-[#b8babb]">
                <option>Single</option>
              </select>
              <svg className="absolute top-1 right-0.5 h-1 w-1.5" viewBox="0 0 6 4">
                <path d="M0 0h6L3 4z" fill="#b8babb" />
              </svg>
            </span>
            <button className="ml-1 h-3 w-[29px] border border-[#4dd0ff] bg-[#4dd0ff] text-[8px] leading-[10px] text-[#163540]">A</button>
            <button className="ml-px h-3 w-[29px] border border-[#3fa9cf] text-[8px] leading-[10px] text-[#4dd0ff]">B</button>
          </div>
          <div className="flex flex-1 flex-col px-1 pt-px">
            <Waveform />
            <span className="-mt-3 self-end pr-1.5 text-[#b0b2b3]">0.46 sec</span>
          </div>
          <div className="flex flex-col gap-[3px] border-t border-[#34383b] bg-[#1e2225] py-1 pl-1">
            <IrRow label="Type" value="02 Ambience and Small Ro..." />
            <IrRow label="IR" value="TVC33 Vocal Doubler" />
          </div>
        </div>
        <div className="flex flex-1 flex-col items-center pt-0.5">
          <Param label="Decay" value="100 %" angle={0} fill="#43c6f3" />
          <Param label="Size" value="100 %" angle={0} fill="#43c6f3" />
          <Param label="Predelay" value="0.00 ms" angle={-150} />
        </div>
      </div>
      <div className="ml-1.5 flex w-[272px] rounded-md bg-[#414243] p-[3px] pl-1">
        <div className="flex w-3.5 flex-col items-center">
          <svg className="mt-px mr-1 h-2 w-2 shrink-0" viewBox="0 0 8 8">
            <circle cx="4" cy="4" r="3.3" fill="none" stroke="#a0a2a3" />
            <path d="M3 2.3L5.800 4L3 5.700z" fill="#a0a2a3" />
          </svg>
          <div className="flex flex-1 flex-col pt-[5px]">
            {TABS.map((t) => (
              <button key={t.name} aria-label={`${t.name} on`} className="mr-1 flex h-3.5 items-center">
                <span className={`block h-2 w-2 rounded-full ${t.on ? "bg-[#4dd0ff]" : "bg-[#858789]"}`} />
              </button>
            ))}
          </div>
        </div>
        <div className="flex flex-1 overflow-hidden rounded-sm bg-[#191d20]">
          <div className="flex w-10 flex-col border-r border-[#3c4043] pt-[13px]">
            {TABS.map((t) => (
              <button key={t.name} className={`h-3.5 border-t border-[#34383b] ${t.name === "EQ" ? "text-[#4dd0ff]" : ""}`}>
                {t.name}
              </button>
            ))}
            <span className="border-t border-[#34383b]" />
          </div>
          <div className="flex flex-1 flex-col">
            <EqGraph />
            <div className="flex flex-1 border-t border-[#34383b] bg-[#1e2225] pt-[3px] pl-[21px]">
              <SmallParam label="Freq" value="100.0 Hz" angle={-105} fill width="w-[69px]" />
              <SmallParam label="Gain" value="-1.8 dB" angle={-50} width="w-[62px]" />
              <SmallParam label="S" value="1.00" angle={-50} fill width="w-10" />
            </div>
          </div>
        </div>
      </div>
      <div className="flex flex-1 flex-col items-center gap-px pt-[3px]">
        <Param label="Width" value="100 %" angle={145} fill="#43c6f3" />
        <Param label="Gain" value="0.0 dB" angle={0} fill="#43c6f3" />
        <Param label="Dry/Wet" value="100 %" angle={145} fill="#43c6f3" />
      </div>
    </div>
  </article>
);

const Folded = ({ name, on }: { name: string; on?: boolean }) => (
  <div className="flex w-[15px] flex-col items-center bg-[#cfd0cb]">
    <span className="flex h-[13px] w-full items-center justify-center bg-[#edecea]">
      <Power on={on} />
    </span>
    <h3 className="flex flex-1 rotate-180 items-center text-[8px] font-bold whitespace-nowrap italic [writing-mode:vertical-rl]">
      <span className="mb-auto pt-1">{name}</span>
    </h3>
    <span className="flex flex-col gap-[3px] pb-[3px]">
      <Swap />
      <Save />
    </span>
  </div>
);

const UtilButton = ({ text }: { text: string }) => (
  <button className="h-2.5 w-6 border border-[#74756c] text-[8px] leading-[8px] whitespace-nowrap">{text}</button>
);

const UtilField = ({ value }: { value: string }) => (
  <span className="relative mt-px flex h-2.5 w-[34px] items-center justify-center border border-[#74756c] bg-[#f0f0ee] pr-1">
    {value}
    <svg className="absolute right-0 h-1.5 w-1" viewBox="0 0 4 6">
      <path d="M4 0v6L0 3z" fill="#cfcfcb" />
    </svg>
  </span>
);

const Utility = () => (
  <article className="flex w-[63px] shrink-0 flex-col overflow-hidden rounded-md bg-[#cfd0cb]">
    <h3 className="flex h-[13px] items-center gap-[3px] bg-[#edecea] pl-0.5 text-[8px] font-bold italic">
      <Power on />
      <span className="flex-1">Util...</span>
      <span className="flex gap-0.5 pr-[3px]">
        <Swap />
        <Save />
      </span>
    </h3>
    <div className="flex flex-1 flex-col items-center pr-px text-[8px] text-[#33342f]">
      <div className="mt-0.5 flex gap-px">
        <UtilButton text="Mute" />
        <UtilButton text="DC" />
      </div>
      <span className="mt-0.5">Gain</span>
      <svg className="mt-px h-[5px] w-[7px]" viewBox="0 0 7 5">
        <path d="M0.5 0.5h6L3.5 4.5z" fill="#f0824a" stroke="#9a5a32" strokeWidth="0.6" />
      </svg>
      <Knob label="Gain" angle={35} fill="#f29a62" fillFrom={0} />
      <span>8.33 dB</span>
      <span className="relative mt-1 h-2.5">
        <select aria-label="Channel mode" className="h-2.5 w-[34px] appearance-none border border-[#74756c] bg-[#f0f0ee] pl-px">
          <option>Stereo</option>
        </select>
        <svg className="absolute top-[3px] right-0.5 h-1 w-[5px]" viewBox="0 0 5 4">
          <path d="M0 0h5L2.5 4z" fill="#111" />
        </svg>
      </span>
      <span className="mt-[3px]">Panorama</span>
      <UtilField value="C" />
      <span className="mt-0.5">Width</span>
      <UtilField value="100 %" />
      <div className="mt-1 flex gap-px">
        <UtilButton text="Phz-L" />
        <UtilButton text="Phz-R" />
      </div>
    </div>
  </article>
);

const MeterGap = ({ className }: { className: string }) => (
  <div className={`flex shrink-0 items-center justify-center ${className}`}>
    <MiniMeter />
  </div>
);

const Devices = () => (
  <section className="mt-[7px] mr-[5px] ml-1.5 flex h-[152px] shrink-0 rounded-t-md rounded-bl-md bg-[#818277] py-1 pr-[3px]">
    <MeterGap className="w-3" />
    <Rack />
    <Convolution />
    <article className="ml-px flex w-[31px] shrink-0 overflow-hidden rounded-r-md bg-[#cfd0cb]">
      <Folded name="Glue Compressor" />
      <div className="flex-1 border-l border-[#8e8f84]">
        <div className="h-[13px] bg-[#edecea]" />
      </div>
    </article>
    <MeterGap className="w-2" />
    <article className="flex shrink-0 overflow-hidden rounded-md">
      <Folded name="Drum - full parallel" on />
    </article>
    <MeterGap className="w-2" />
    <Utility />
    <MeterGap className="w-[7px]" />
    <p className="flex min-w-0 flex-1 items-center justify-center bg-[#cfd0cb] text-[7px] font-bold">Drop Audio Effects Here</p>
  </section>
);

const Footer = () => (
  <footer className="flex h-[27px] shrink-0 items-start pr-[5px] pl-1.5">
    <div className="flex h-full items-center pt-[3px]">
      <Round label="Info view">
        <svg className="h-2 w-2" viewBox="0 0 8 8">
          <path d="M1.5 0.5L7.5 4L1.5 7.500z" fill="#b1b4a9" />
        </svg>
      </Round>
    </div>
    <div className="mt-1.5 ml-[7px] h-[17px] flex-1 rounded-sm border-2 border-[#8a8b80] bg-[#cfd0cb]" />
    <div className="mt-1.5 ml-[7px] h-[17px] w-[158px] rounded-sm border-2 border-[#8a8b80] bg-[#cfd0cb]" />
    <div className="ml-[7px] flex h-6 w-[191px] items-center justify-between rounded-b-sm bg-[#818277] pt-1.5 pr-[3px] pl-[3px] text-[7px] font-bold whitespace-nowrap">
      808 Loop - BOS Urban Nights
      <span className="flex h-[13px] w-[81px] items-center bg-[#d3d5d0]">
        <svg className="h-3 w-4 shrink-0" viewBox="0 0 16 12">
          <path d="M2 3h6v3H2z" fill="#35e96f" />
          <path d="M9 4h6M6 9h8" stroke="#a6a89e" strokeWidth="0.8" />
          <path d="M13 1h3" stroke="#f4f4f2" />
        </svg>
        <span className="shrink-0">Convolution Re</span>
        <svg className="h-[13px] min-w-0 flex-1" viewBox="0 0 12 13" preserveAspectRatio="none">
          <path d="M2 0v13M5 0v13" stroke="#85867b" />
          <rect x="7" y="1" width="4" height="11" fill="#e4e4e1" />
        </svg>
      </span>
    </div>
    <div className="flex h-full items-center pt-[3px] pl-[7px]">
      <Round label="Hide devices">
        <svg className="h-2 w-2" viewBox="0 0 8 8">
          <path d="M4 0.5L7.5 7h-7z" fill="#c3c5bb" />
        </svg>
      </Round>
    </div>
  </footer>
);

const App = () => (
  <div className="flex min-h-screen flex-col bg-[#b1b4a9] font-['Liberation_Sans',Arial,sans-serif] leading-none text-[#1d1d1b]">
    <Toolbar />
    <Session />
    <Devices />
    <Footer />
  </div>
);

export default App;
